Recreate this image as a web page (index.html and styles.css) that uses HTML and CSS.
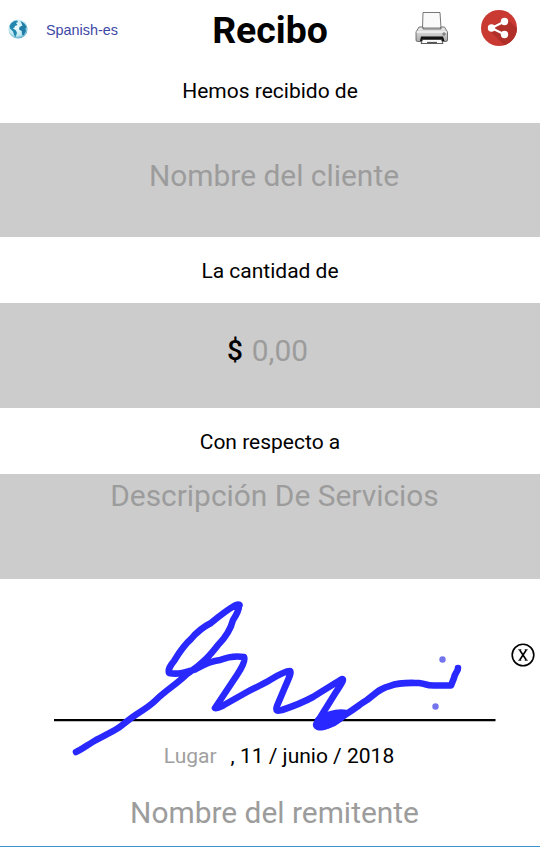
FILE: index.html
```html
<!DOCTYPE html>
<html lang="es">
<head>
    <meta charset="UTF-8">
    <meta name="viewport" content="width=device-width, initial-scale=1.0">
    <title>Recibo</title>
    <link rel="stylesheet" href="styles.css">
</head>
<body>
    <header class="top-bar">
        <div class="language">
            <svg class="globe" viewBox="0 0 20 20">
                <defs>
                    <radialGradient id="sea" cx="45%" cy="40%" r="62%">
                        <stop offset="0" stop-color="#f2fdff"/>
                        <stop offset="0.7" stop-color="#c3e9f2"/>
                        <stop offset="1" stop-color="#4aa3c4"/>
                    </radialGradient>
                </defs>
                <circle cx="10" cy="10" r="9.6" fill="url(#sea)"/>
                <path d="M1.5 7 Q4 1.5 9 1.5 L10 3 L8 4 L9.5 6 L7 7 L6 9 L4.5 9 L8 11.5 L9 14 L7.5 18 L6 16 L5 12.5 L2 9.5z" fill="#2487b0"/>
                <path d="M12.5 2 Q17.5 4 18.7 8.5 L17.5 9.5 L18 12 L15.5 16.5 L14 15.5 L13.7 12 L11 10.5 L11.5 8 L14.5 6.5z" fill="#207da6"/>
            </svg>
            <span>Spanish-es</span>
        </div>
        <h1>Recibo</h1>
        <div class="actions">
            <svg class="printer" viewBox="0 0 34 34">
                <defs>
                    <linearGradient id="casing" x1="0" y1="0" x2="0" y2="1">
                        <stop offset="0" stop-color="#eeeeee"/>
                        <stop offset="1" stop-color="#aaaaaa"/>
                    </linearGradient>
                </defs>
                <path d="M7.5 17 L8 1.5 H25 L26 17z" fill="#fafafa" stroke="#555" stroke-width="0.8"/>
                <path d="M4 16 H8 V18 H26 V16 H29.5 L32.5 21 V29 Q32.5 30.5 31 30.5 H2.5 Q1 30.5 1 29 V21z" fill="url(#casing)" stroke="#555" stroke-width="0.8"/>
                <path d="M1.5 21 H32" stroke="#fff" stroke-width="1"/>
                <path d="M6 25.5 H28 L29.5 30 H5z" fill="#111"/>
                <path d="M7.5 28.5 H26.5 L28 32.5 H6z" fill="#fafafa" stroke="#333" stroke-width="0.8"/>
                <path d="M12 31.5 H22" stroke="#555" stroke-width="1.2"/>
                <circle cx="29" cy="23" r="1.2" fill="#ccc" stroke="#444" stroke-width="0.7"/>
            </svg>
            <svg class="share" viewBox="0 0 36 36">
                <defs>
                    <clipPath id="disc"><circle cx="18" cy="18" r="18"/></clipPath>
                </defs>
                <g clip-path="url(#disc)">
                    <rect width="36" height="36" fill="#c93a33"/>
                    <path d="M8 20 L14 14 L26 9 L38 20 V38 H26z" fill="#b02f29"/>
                </g>
                <path d="M23.5 11.5 L10.5 18 L23.5 24.5" fill="none" stroke="#fff" stroke-width="2.2"/>
                <circle cx="10.5" cy="18" r="3.7" fill="#fff"/>
                <circle cx="23.5" cy="11.5" r="3.7" fill="#fff"/>
                <circle cx="23.5" cy="24.5" r="3.7" fill="#fff"/>
            </svg>
        </div>
    </header>

    <main>
        <p class="label label-first">Hemos recibido de</p>
        <div class="field field-client">Nombre del cliente</div>
        <p class="label">La cantidad de</p>
        <div class="field field-amount"><b>$</b><span>0,00</span></div>
        <p class="label">Con respecto a</p>
        <div class="field field-services">Descripción De Servicios</div>

        <section class="signature">
            <svg class="signature-pad" viewBox="0 579 540 179">
                <path d="M54 720.2 H495.5" stroke="#000" stroke-width="2.3"/>
                <g class="ink">
                    <path d="M76 752 C81 750 89 744 96 740 C106 735 116 730 121 726 C126 722 131 718 137 714 C145 709 151 705 156 700 C166 690 177 684 187 674 C203 664 211 654 218 645 C226 637 231 628 233 620 C237 614 239 609 239 606 C241 604 237 604 234 606 C224 612 217 618 211 623 C203 627 196 633 191 639 C183 646 179 653 174 661 C170 666 168 669 169 673 C179 675 187 672 196 669 C203 665 210 661 220 660 C230 656 238 656 244 657 C246 661 241 669 237 675 L215 708 C217 709 220 707 224 705 L247 692 C256 687 264 684 270 680 C278 675 285 671 290 671 C292 672 288 680 285 687 L277 706 C275 712 278 711 282 710 C291 707 302 703 313 697 C324 690 334 684 342 679 C345 679 340 686 336 692 L318 721 C314 726 317 728 323 727 C333 725 340 718 348 713 C357 707 362 703 367 700 C375 694 380 688 390 686 C400 682 411 683 419 683 C428 684 424 685.5 434 685.5 H451 L454 678 C455 672 458 672 458 668"/>
                    <path class="blot" d="M318 720 C328 714 339 712 346 713 C340 720 332 726 319 727z"/>
                </g>
                <circle class="speck" cx="442.5" cy="659.5" r="3.2"/>
                <circle class="speck" cx="435.5" cy="706.5" r="3.2"/>
            </svg>
            <svg class="clear-btn" viewBox="0 0 24 24">
                <circle cx="12" cy="12" r="10.8" fill="none" stroke="#000" stroke-width="1.6"/>
                <path d="M8.7 7 L15.3 17 M15.3 7 L8.7 17" stroke="#000" stroke-width="1.6"/>
                <path d="M7.2 6.7 H10.3 M13.7 6.7 H16.8 M7.2 17.3 H10.3 M13.7 17.3 H16.8" stroke="#000" stroke-width="0.8"/>
            </svg>
        </section>

        <div class="place-date">
            <span class="place">Lugar</span>
            <span>, 11 / junio / 2018</span>
        </div>
        <div class="sender">Nombre del remitente</div>
    </main>
</body>
</html>
```
FILE: styles.css
```css
* {
    box-sizing: border-box;
}
body {
    margin: 0;
    height: 847px;
    background: #fff;
    color: #000;
    font-family: Roboto, "Liberation Sans", sans-serif;
    border-bottom: 1px solid #3d92cd;
    overflow: hidden;
}
svg {
    display: block;
}
.top-bar {
    display: grid;
    grid-template-columns: 190px 1fr 190px;
    height: 60px;
    align-items: center;
}
.language {
    display: flex;
    align-items: center;
    gap: 18px;
    padding: 0 0 4px 8px;
    color: #3d47a5;
    font: 14.4px "Liberation Sans", Arial, sans-serif;
}
.language span {
    padding-top: 2px;
}
.globe {
    width: 20px;
    height: 20px;
}
h1 {
    margin: 0;
    font-size: 37.4px;
    line-height: 61px;
    font-weight: 700;
    text-align: center;
    white-space: nowrap;
}
.actions {
    display: flex;
    align-items: center;
    gap: 32px;
    padding: 0 0 5px 65px;
}
.printer {
    width: 34px;
    height: 34px;
}
.share {
    width: 36px;
    height: 36px;
}
.label {
    margin: 0;
    height: 66px;
    line-height: 69px;
    font-size: 21px;
    text-align: center;
}
.label-first {
    height: 63px;
    line-height: 62px;
}
.field {
    display: flex;
    justify-content: center;
    background: #ccc;
    color: #9c9c9c;
    font-size: 29.9px;
    line-height: 36px;
}
.field-client {
    height: 114px;
    padding: 35px 0 0 8px;
}
.field-amount {
    height: 105px;
    padding-top: 30px;
    padding-right: 5px;
    gap: 9px;
}
.field-amount b {
    color: #000;
    font-size: 28px;
    font-weight: 500;
}
.field-services {
    height: 105px;
    padding: 4px 0 0 9px;
}
.signature {
    position: relative;
    height: 159px;
}
.signature-pad {
    width: 540px;
    height: 179px;
}
.ink {
    fill: none;
    stroke: #2929ff;
    stroke-width: 6.6;
    stroke-linecap: round;
    stroke-linejoin: round;
}
.blot {
    fill: #2929ff;
}
.speck {
    fill: #7474ed;
}
.clear-btn {
    position: absolute;
    right: 5px;
    top: 64px;
    width: 24px;
    height: 24px;
}
.place-date {
    display: flex;
    justify-content: center;
    gap: 14px;
    padding-left: 18px;
    height: 36px;
    line-height: 36px;
    font-size: 21px;
}
.place {
    color: #a0a0a0;
}
.sender {
    height: 72px;
    padding-left: 9px;
    line-height: 77px;
    font-size: 29.9px;
    color: #9c9c9c;
    text-align: center;
}
```
